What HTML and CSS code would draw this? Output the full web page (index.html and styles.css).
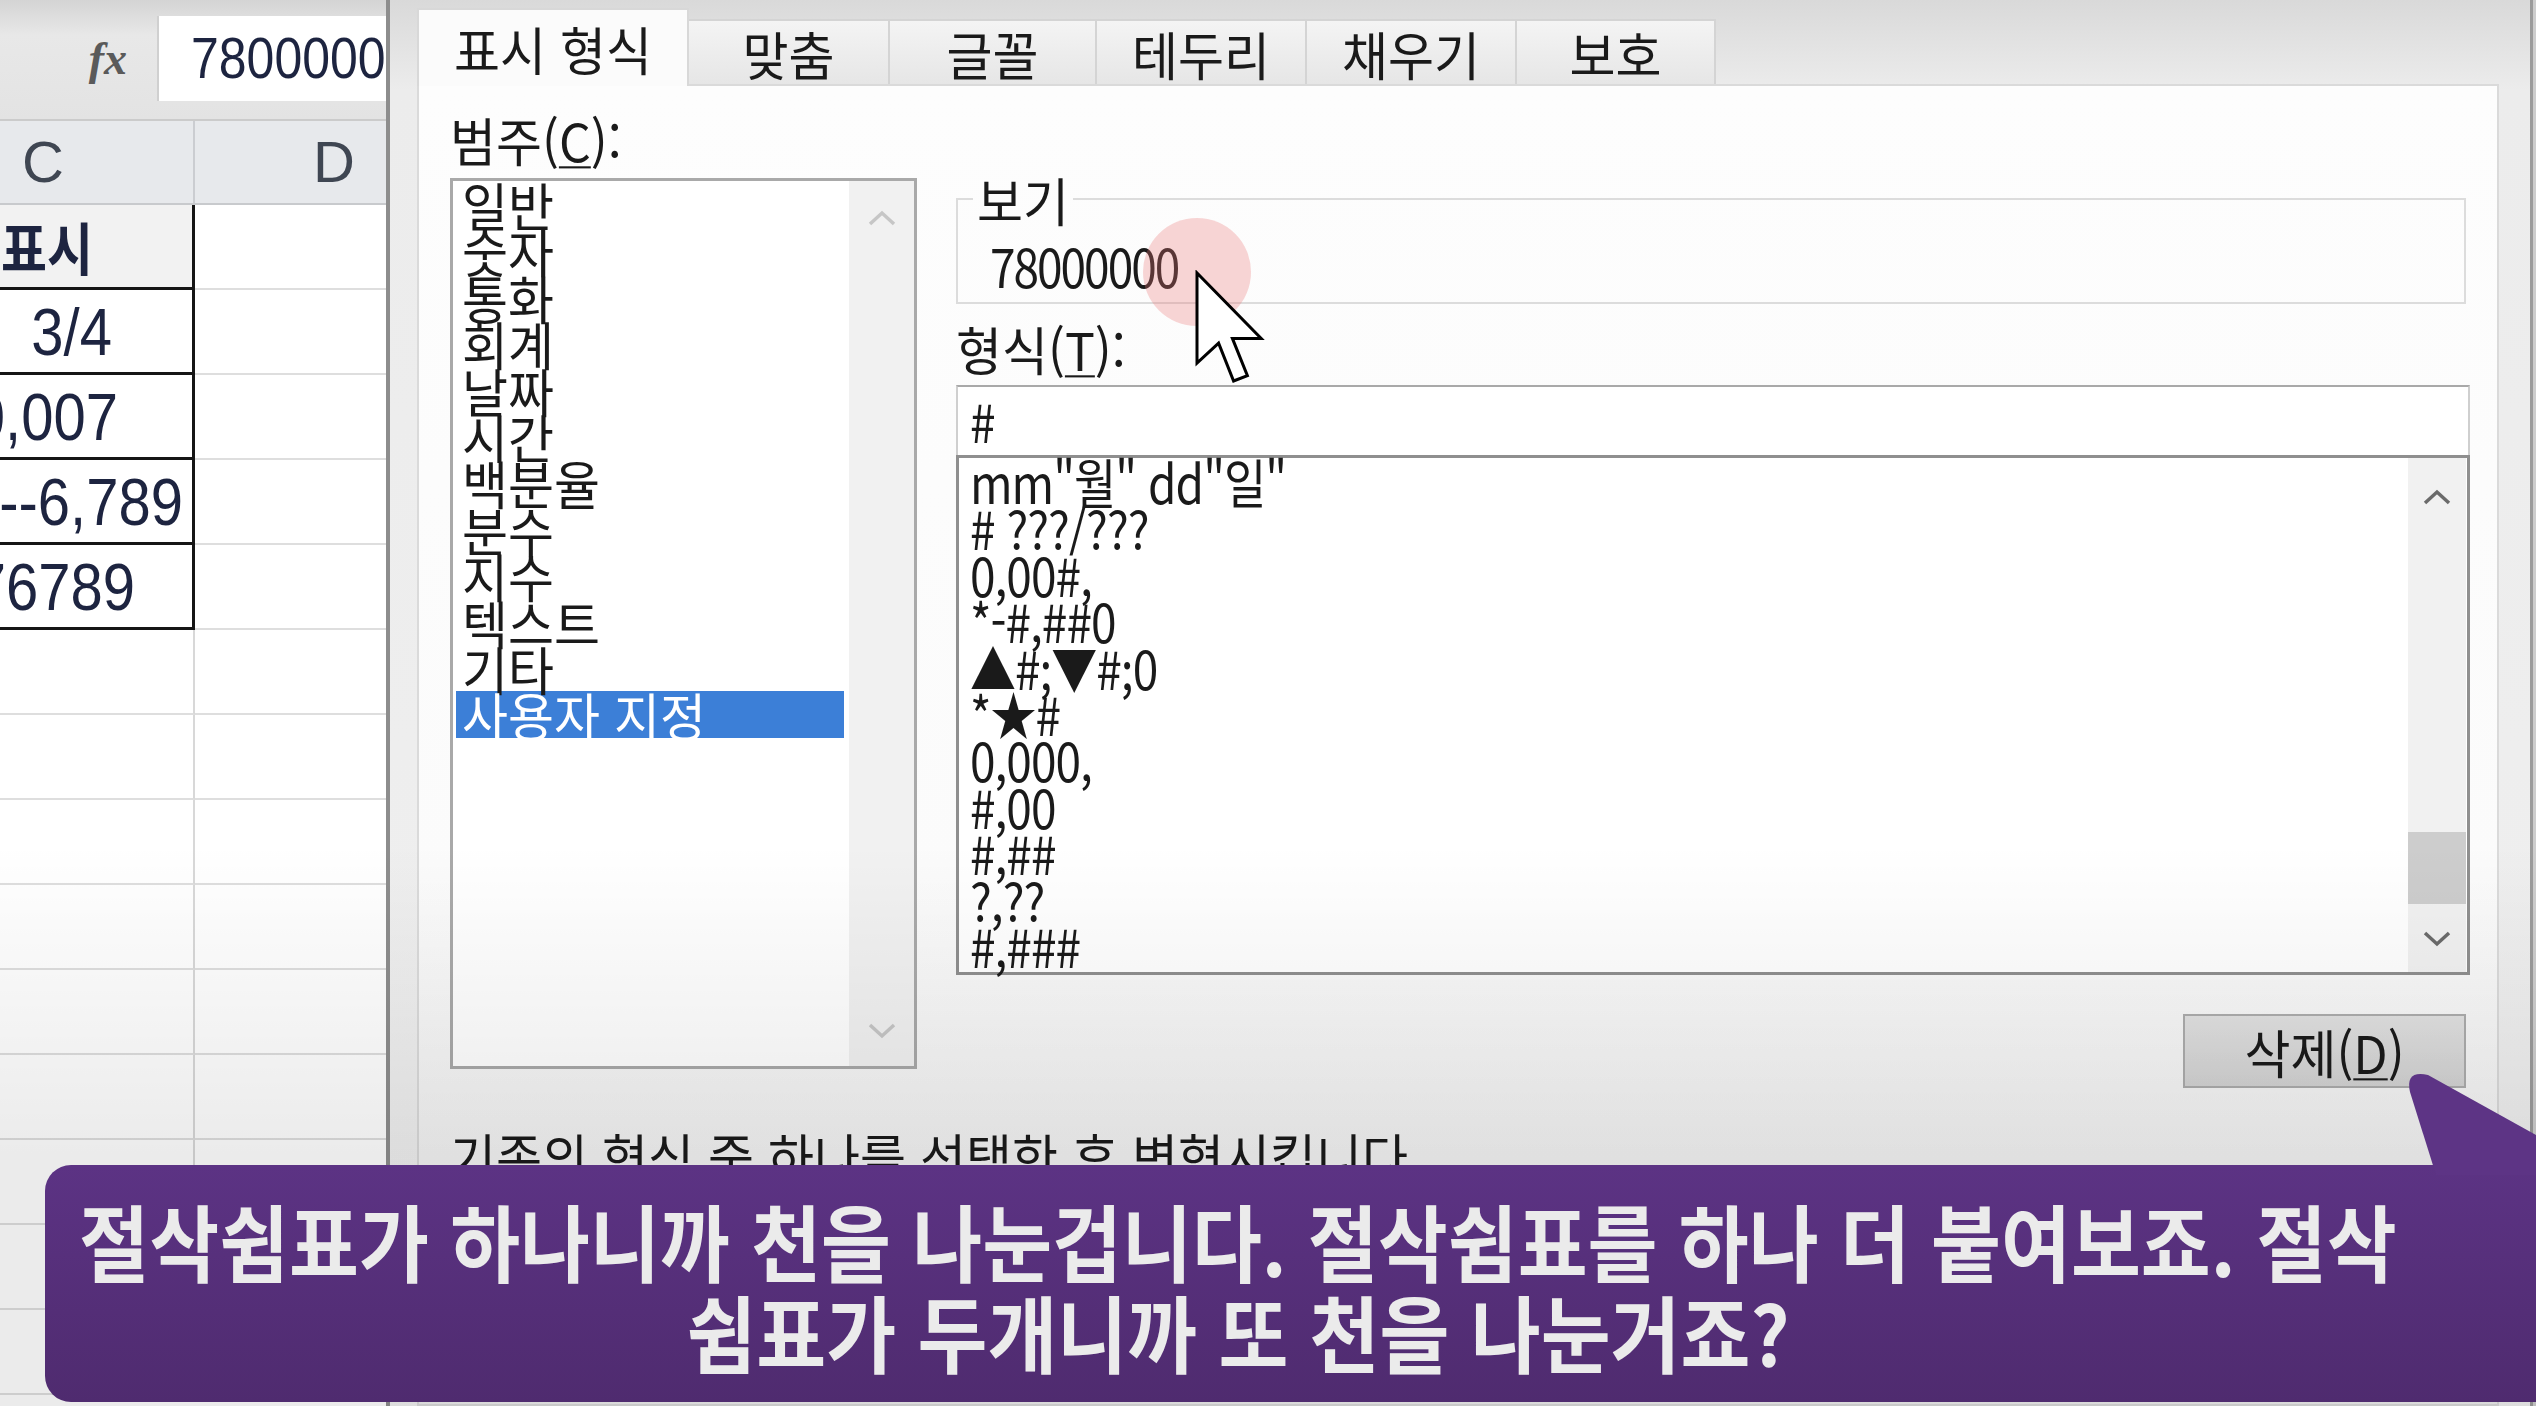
FILE: index.html
```html
<!DOCTYPE html>
<html lang="ko">
<head>
<meta charset="utf-8">
<title>셀 서식</title>
<link rel="stylesheet" href="styles.css">
</head>
<body>
<div class="app">
  <div class="excel">
    <div class="fbar">
      <div class="fx">fx</div>
      <div class="finput"><span class="s">78000000</span></div>
    </div>
    <div class="colhdr">
      <div class="h hc">C</div>
      <div class="h hd">D</div>
    </div>
    <div class="grid">
      <div class="row"><div class="c b hcell p1"><span class="s">표시</span></div><div class="d"></div></div>
      <div class="row"><div class="c b p2"><span class="s">3/4</span></div><div class="d"></div></div>
      <div class="row"><div class="c b p3"><span class="s">0,007</span></div><div class="d"></div></div>
      <div class="row"><div class="c b p4"><span class="s">--6,789</span></div><div class="d"></div></div>
      <div class="row"><div class="c b p5"><span class="s">76789</span></div><div class="d"></div></div>
      <div class="row"><div class="c"></div><div class="d"></div></div>
      <div class="row"><div class="c"></div><div class="d"></div></div>
      <div class="row"><div class="c"></div><div class="d"></div></div>
      <div class="row"><div class="c"></div><div class="d"></div></div>
      <div class="row"><div class="c"></div><div class="d"></div></div>
      <div class="row"><div class="c"></div><div class="d"></div></div>
      <div class="row"><div class="c"></div><div class="d"></div></div>
      <div class="row"><div class="c"></div><div class="d"></div></div>
      <div class="row"><div class="c"></div><div class="d"></div></div>
    </div>
  </div>

  <div class="dialog">
    <div class="tabs">
      <div class="tab on"><span class="s">표시 형식</span></div>
      <div class="tab"><span class="s">맞춤</span></div>
      <div class="tab"><span class="s">글꼴</span></div>
      <div class="tab"><span class="s">테두리</span></div>
      <div class="tab"><span class="s">채우기</span></div>
      <div class="tab"><span class="s">보호</span></div>
    </div>
    <div class="panel">
      <div class="left">
        <div class="lbl"><span class="s">범주(<u>C</u>):</span></div>
        <div class="catbox">
          <ul class="cat">
            <li><span class="s">일반</span></li>
            <li><span class="s">숫자</span></li>
            <li><span class="s">통화</span></li>
            <li><span class="s">회계</span></li>
            <li><span class="s">날짜</span></li>
            <li><span class="s">시간</span></li>
            <li><span class="s">백분율</span></li>
            <li><span class="s">분수</span></li>
            <li><span class="s">지수</span></li>
            <li><span class="s">텍스트</span></li>
            <li><span class="s">기타</span></li>
            <li class="sel"><span class="s">사용자 지정</span></li>
          </ul>
          <div class="sb sb-cat">
            <div class="sbtn up"><svg class="chev" viewBox="0 0 28 17"><polyline points="2,14 14,3 26,14"/></svg></div>
            <div class="track"></div>
            <div class="sbtn dn"><svg class="chev" viewBox="0 0 28 17"><polyline points="2,3 14,14 26,3"/></svg></div>
          </div>
        </div>
      </div>

      <div class="right">
        <fieldset class="preview">
          <legend><span class="s">보기</span></legend>
          <div class="pv"><span class="s">78000000</span></div>
        </fieldset>
        <div class="lbl fl"><span class="s">형식(<u>T</u>):</span></div>
        <div class="finp"><span class="s">#</span></div>
        <div class="fmtbox">
          <ul class="fmt">
            <li><span class="s">mm"월" dd"일"</span></li>
            <li><span class="s"># ???/???</span></li>
            <li><span class="s">0,00#,</span></li>
            <li><span class="s">*-#,##0</span></li>
            <li><span class="s">▲#;▼#;0</span></li>
            <li><span class="s">*★#</span></li>
            <li><span class="s">0,000,</span></li>
            <li><span class="s">#,00</span></li>
            <li><span class="s">#,##</span></li>
            <li><span class="s">?,??</span></li>
            <li><span class="s">#,###</span></li>
          </ul>
          <div class="sb sb-fmt">
            <div class="sbtn up"><svg class="chev" viewBox="0 0 28 17"><polyline points="2,14 14,3 26,14"/></svg></div>
            <div class="track"><div class="thumb"></div></div>
            <div class="sbtn dn"><svg class="chev" viewBox="0 0 28 17"><polyline points="2,3 14,14 26,3"/></svg></div>
          </div>
        </div>
        <button class="del"><span class="s">삭제(<u>D</u>)</span></button>
      </div>

      <div class="desc"><span class="s">기존의 형식 중 하나를 선택한 후 변형시킵니다.</span></div>
    </div>
  </div>
</div>

<div class="click"></div>
<svg class="cursor" viewBox="0 0 13 20"><path d="M0.5 0.5 L0.5 15.5 L4.1 12.2 L6.6 18.5 L8.9 17.6 L6.4 11.4 L11.2 11.4 Z"/></svg>

<div class="vig"></div>

<div class="sub">
  <svg class="tail" viewBox="0 0 146 110"><path d="M46 110 L20 27 Q15 5 38 10 L146 70 L146 110 Z"/></svg>
  <div class="sline"><span class="s">절삭쉼표가 하나니까 천을 나눈겁니다. 절삭쉼표를 하나 더 붙여보죠. 절삭</span></div>
  <div class="sline"><span class="s">쉼표가 두개니까 또 천을 나눈거죠?</span></div>
</div>
</body>
</html>
```

FILE: styles.css
```css
html, body {
  margin: 0;
  padding: 0;
}
body {
  width: 2536px;
  height: 1406px;
  overflow: hidden;
  position: relative;
  background: #cdcdcd;
  font-family: "Noto Sans CJK KR", "Noto Sans", sans-serif;
  color: #1a1a1a;
}
.s {
  display: inline-block;
  transform: scaleY(1.15);
}
u {
  text-decoration-thickness: 2px;
  text-underline-offset: 4px;
}

.app {
  display: flex;
  height: 1406px;
}

/* ---------- Excel sheet ---------- */
.excel {
  width: 386px;
  flex: none;
  display: flex;
  flex-direction: column;
  background: #fff;
  overflow: hidden;
}
.fbar {
  height: 121px;
  box-sizing: border-box;
  padding: 16px 0 18px;
  display: flex;
  background: linear-gradient(#d4d4d4, #e8e8e8 30%, #e3e3e3);
  border-bottom: 2px solid #cbcbcb;
}
.fx {
  width: 157px;
  flex: none;
  box-sizing: border-box;
  padding-right: 30px;
  display: flex;
  align-items: center;
  justify-content: flex-end;
  font-family: "Liberation Serif", serif;
  font-style: italic;
  font-weight: 700;
  font-size: 46px;
  color: #5a5a5a;
}
.finput {
  flex: 1;
  background: #fff;
  border-left: 2px solid #d0d0d0;
  padding-left: 32px;
  font-family: "Liberation Sans", Arial, sans-serif;
  font-size: 50px;
  line-height: 87px;
  white-space: nowrap;
  overflow: hidden;
  color: #1d2440;
}
.colhdr {
  height: 84px;
  box-sizing: border-box;
  display: grid;
  grid-template-columns: 195px 1fr;
  background: #e7e9ec;
  border-bottom: 2px solid #c8cacd;
  font-family: "Liberation Sans", Arial, sans-serif;
  font-size: 58px;
  line-height: 82px;
  color: #3f4652;
}
.hc {
  padding-left: 22px;
  border-right: 2px solid #cbcdd1;
}
.hd {
  padding-left: 118px;
}
.row {
  height: 85px;
  display: grid;
  grid-template-columns: 195px 1fr;
}
.c, .d {
  box-sizing: border-box;
  border-bottom: 2px solid #dedede;
}
.c {
  border-right: 2px solid #d8d8d8;
  display: flex;
  align-items: center;
  justify-content: flex-end;
  overflow: hidden;
  white-space: nowrap;
  font-family: "Liberation Sans", Arial, "Noto Sans CJK KR", sans-serif;
  font-size: 58px;
  color: #1d2440;
}
.c.b {
  border-right: 3px solid #151515;
  border-bottom: 3px solid #151515;
}
.hcell {
  background: #f2f2f2;
  font-family: "Noto Sans CJK KR", sans-serif;
  font-weight: 700;
  font-size: 50px;
}
.p1 { padding-right: 99px; }
.p2 { padding-right: 80px; }
.p3 { padding-right: 74px; }
.p4 { padding-right: 9px; }
.p5 { padding-right: 57px; }

/* ---------- Dialog ---------- */
.dialog {
  width: 2147px;
  flex: none;
  box-sizing: border-box;
  border-left: 4px solid #8d8d8d;
  border-right: 3px solid #9b9b9b;
  background: linear-gradient(#d9d9d9, #ececec 90px, #f0f0f0);
  padding: 0 31px 0 27px;
  display: flex;
  flex-direction: column;
  font-size: 50px;
}
.dialog .s {
  transform: scaleY(1.05);
}
.tabs {
  height: 84px;
  flex: none;
  display: grid;
  grid-template-columns: 270px 201px 207px 210px 210px 199px;
  align-items: end;
  position: relative;
  z-index: 1;
}
.tab {
  height: 65px;
  box-sizing: border-box;
  border: 2px solid #d4d4d4;
  border-bottom: none;
  margin-right: -2px;
  background: linear-gradient(#f4f4f4, #e6e6e6);
  display: flex;
  align-items: center;
  justify-content: center;
  line-height: 46px;
  white-space: nowrap;
}
.tab.on {
  height: 78px;
  margin-bottom: -2px;
  background: #fbfbfb;
  border-color: #d8d8d8;
  position: relative;
  z-index: 2;
}
.panel {
  flex: 1;
  min-height: 0;
  box-sizing: border-box;
  border: 2px solid #dadada;
  background: linear-gradient(#fdfdfd 0%, #fbfbfb 60%, #ececec 100%);
  padding: 30px 27px 0 31px;
  display: grid;
  grid-template-columns: 467px 1fr;
  column-gap: 39px;
  align-content: start;
}
.lbl {
  line-height: 46px;
  white-space: nowrap;
}
.left {
  display: flex;
  flex-direction: column;
}
.catbox {
  margin-top: 16px;
  height: 891px;
  box-sizing: border-box;
  border: 3px solid #a9a9a9;
  display: flex;
  background: #fff;
}
.cat, .fmt {
  list-style: none;
  margin: 0;
  flex: 1;
  line-height: 46.4px;
  white-space: nowrap;
}
.cat {
  padding: 0;
}
.cat li {
  padding-left: 6px;
  margin-left: 3px;
}
.cat li.sel {
  background: #3c7fd7;
  color: #fff;
  margin-right: 5px;
}
.sb {
  display: flex;
  flex-direction: column;
  background: #f1f1f1;
}
.sb-cat {
  width: 65px;
}
.sb-cat .up { height: 74px; }
.sb-cat .dn { height: 72px; }
.sb-cat .chev polyline { stroke: #c6c6c6; }
.sb-fmt {
  width: 58px;
  margin-right: 1px;
}
.sb-fmt .up { height: 78px; }
.sb-fmt .dn { height: 68px; }
.sbtn {
  flex: none;
  display: flex;
  align-items: center;
  justify-content: center;
}
.track {
  flex: 1;
  display: flex;
  align-items: flex-end;
}
.thumb {
  width: 100%;
  height: 72px;
  background: #cdcdcd;
}
.chev {
  width: 28px;
  height: 17px;
}
.chev polyline {
  fill: none;
  stroke: #6b6b6b;
  stroke-width: 3.5;
}

.right {
  display: flex;
  flex-direction: column;
  min-width: 0;
}
.preview {
  margin: 60px 4px 0 0;
  padding: 0 0 14px 0;
  border: 2px solid #dcdcdc;
  min-width: 0;
}
.preview legend {
  margin-left: 15px;
  padding: 0 4px;
  line-height: 46px;
}
.pv {
  margin-top: 20px;
  padding-left: 32px;
  font-size: 46px;
  line-height: 46px;
  letter-spacing: -2px;
}
.fl {
  margin-top: 21px;
}
.finp {
  margin-top: 14px;
  height: 70px;
  box-sizing: border-box;
  border: 2px solid #cfcfcf;
  border-top-color: #a9a9a9;
  border-bottom: none;
  padding-left: 12px;
  font-size: 46px;
  line-height: 66px;
  background: #fff;
}
.fmtbox {
  height: 520px;
  box-sizing: border-box;
  border: 3px solid #8f8f8f;
  display: flex;
  background: #fff;
}
.fmt {
  padding: 0 0 0 11px;
  font-size: 46px;
  letter-spacing: -1px;
}
.fmt .s, .pv .s, .finp .s {
  transform: scaleY(1.15);
}
.del {
  align-self: flex-end;
  margin: 39px 4px 0 0;
  width: 283px;
  height: 74px;
  padding: 0;
  border: 2px solid #acacac;
  background: linear-gradient(#e1e1e1, #d3d3d3);
  font-family: "Noto Sans CJK KR", sans-serif;
  font-size: 50px;
  line-height: 46px;
  color: #1a1a1a;
}
.desc {
  grid-column: 1 / -1;
  margin-top: 44px;
  line-height: 46px;
  white-space: nowrap;
}

/* ---------- overlays ---------- */
.click {
  position: absolute;
  left: 1143px;
  top: 218px;
  width: 108px;
  height: 108px;
  border-radius: 50%;
  background: rgba(236, 118, 118, 0.3);
  z-index: 3;
}
.cursor {
  position: absolute;
  left: 1194px;
  top: 270px;
  width: 78px;
  height: 120px;
  z-index: 4;
}
.cursor path {
  fill: #fff;
  stroke: #000;
  stroke-width: 0.5;
  stroke-linejoin: miter;
}
.vig {
  position: absolute;
  inset: 0;
  background: linear-gradient(rgba(0,0,0,0) 60%, rgba(0,0,0,0.08) 82%);
  z-index: 5;
  pointer-events: none;
}
.sub {
  position: absolute;
  left: 45px;
  top: 1165px;
  width: 2491px;
  height: 237px;
  box-sizing: border-box;
  border-radius: 26px 0 0 26px;
  background: linear-gradient(#5c3384, #4f2b6f);
  padding: 30px 105px 0 0;
  text-align: center;
  color: #ebebeb;
  font-family: "Noto Sans CJK KR", sans-serif;
  font-weight: 700;
  font-size: 76px;
  line-height: 91px;
  white-space: nowrap;
  z-index: 10;
}
.sub .s {
  transform: scaleY(1.1);
}
.tail {
  position: absolute;
  left: 2345px;
  top: -100px;
  width: 146px;
  height: 110px;
}
.tail path {
  fill: #5d3485;
}
```
